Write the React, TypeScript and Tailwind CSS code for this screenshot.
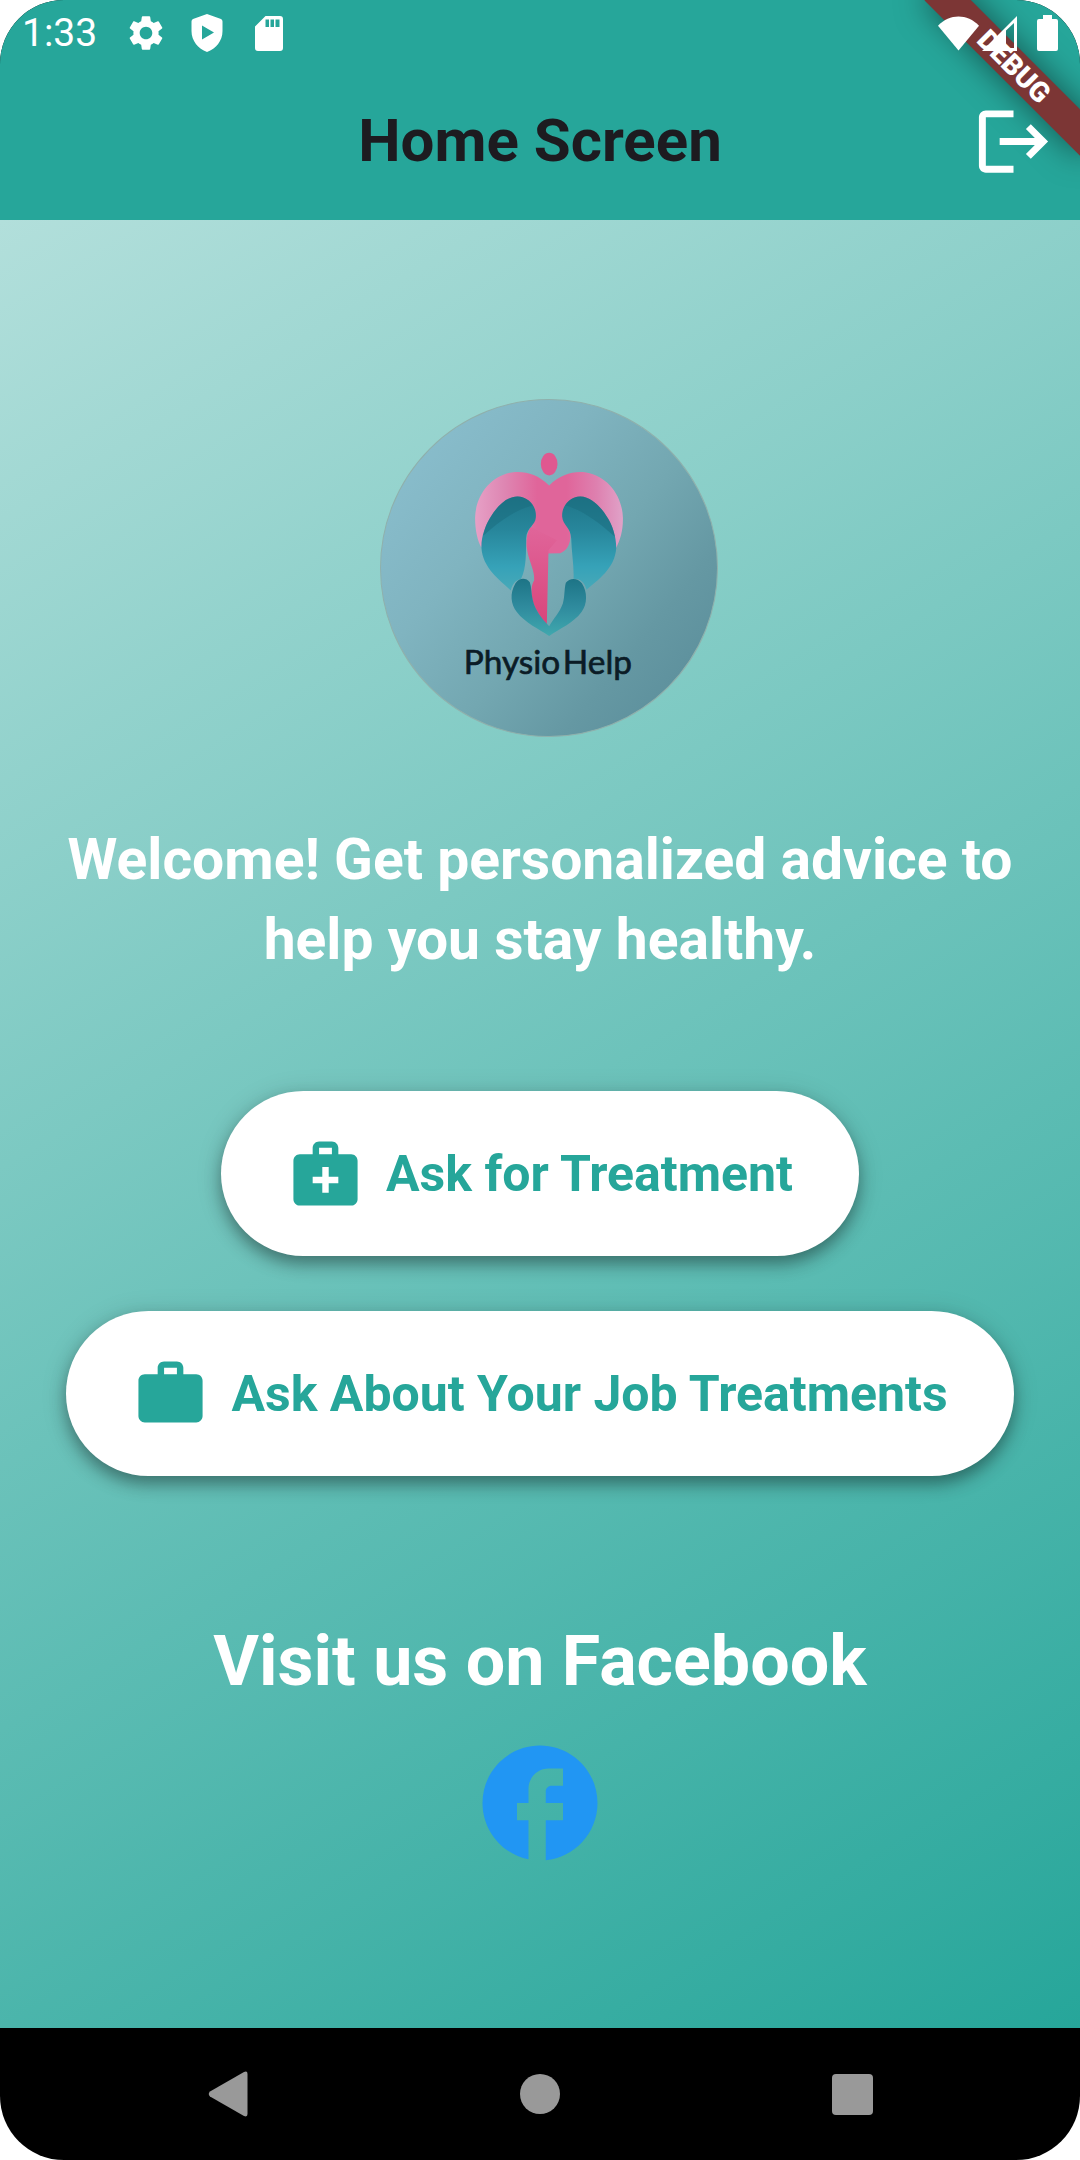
import type { ReactNode } from "react";

function SettingsIcon() {
  return (
    <svg viewBox="0 0 24 24" className="size-[42px]" fill="currentColor" aria-hidden="true">
      <path d="M19.14 12.94c.04-.3.06-.61.06-.94 0-.32-.02-.64-.07-.94l2.03-1.58a.49.49 0 0 0 .12-.61l-1.92-3.32a.488.488 0 0 0-.59-.22l-2.39.96c-.5-.38-1.03-.7-1.62-.94l-.36-2.54a.484.484 0 0 0-.48-.41h-3.84c-.24 0-.43.17-.47.41l-.36 2.54c-.59.24-1.13.57-1.62.94l-2.39-.96c-.22-.08-.47 0-.59.22L2.74 8.87c-.12.21-.08.47.12.61l2.03 1.58c-.05.3-.09.63-.09.94s.02.64.07.94l-2.03 1.58a.49.49 0 0 0-.12.61l1.92 3.32c.12.22.37.29.59.22l2.39-.96c.5.38 1.03.7 1.62.94l.36 2.54c.05.24.24.41.48.41h3.84c.24 0 .44-.17.47-.41l.36-2.54c.59-.24 1.13-.56 1.62-.94l2.39.96c.22.08.47 0 .59-.22l1.92-3.32c.12-.22.07-.47-.12-.61l-2.01-1.58zM12 15.6c-1.98 0-3.6-1.62-3.6-3.6s1.62-3.6 3.6-3.6 3.6 1.62 3.6 3.6-1.62 3.6-3.6 3.6z" />
    </svg>
  );
}

function ShieldIcon() {
  return (
    <svg viewBox="0 0 32 38" className="h-[38px] w-8" fill="currentColor" aria-hidden="true">
      <path
        fillRule="evenodd"
        d="M16 0 30 5Q31.500 5.500 31.500 7.500V17C31.500 27 25 34.500 16 38 7 34.500 .5 27 .5 17V7.500Q.5 5.500 2 5ZM11 11.500V25.500L23 18.500Z"
      />
    </svg>
  );
}

function SdCardIcon() {
  return (
    <svg viewBox="0 0 28 35" className="h-[35px] w-7" fill="currentColor" aria-hidden="true">
      <path
        fillRule="evenodd"
        d="M10.500 0H25Q28 0 28 3V32Q28 35 25 35H3Q0 35 0 32V10.500ZM10.500 3.500V11H14V3.500ZM15.500 3.500V11H19V3.500ZM20.500 3.500V11H24.500V3.500Z"
      />
    </svg>
  );
}

function WifiIcon() {
  return (
    <svg viewBox="0 0 42 35" className="h-[35px] w-[41px]" fill="currentColor" aria-hidden="true">
      <path d="M21 35 0 9.500C12-3 30-3 42 9.500Z" />
    </svg>
  );
}

function SignalIcon() {
  return (
    <svg viewBox="0 0 35 35" className="size-[35px]" fill="currentColor" aria-hidden="true">
      <path fillRule="evenodd" d="M35 0V35H0ZM24 14.500V32H32V7Z" />
    </svg>
  );
}

function BatteryIcon() {
  return (
    <svg viewBox="0 0 21 36" className="h-9 w-[21px]" fill="currentColor" aria-hidden="true">
      <path d="M6 0H15V4H19Q21 4 21 6V34Q21 36 19 36H2Q0 36 0 34V6Q0 4 2 4H6Z" />
    </svg>
  );
}

function PhysioLogo() {
  return (
    <svg viewBox="60 57 1013 1013" className="size-[338px]" role="img" aria-label="Physio Help">
      <defs>
        <linearGradient id="disc" x1="0.12" y1="0.15" x2="0.9" y2="0.8">
          <stop offset="0" stopColor="#88bccb" />
          <stop offset="0.3" stopColor="#80b4c0" />
          <stop offset="0.6" stopColor="#73a7b1" />
          <stop offset="0.85" stopColor="#6598a3" />
          <stop offset="1" stopColor="#5f929e" />
        </linearGradient>
        <linearGradient id="wings" gradientUnits="userSpaceOnUse" x1="345" y1="0" x2="788" y2="0">
          <stop offset="0" stopColor="#e6a0c6" />
          <stop offset="0.2" stopColor="#de86b2" />
          <stop offset="0.42" stopColor="#e0659a" />
          <stop offset="0.62" stopColor="#e0659a" />
          <stop offset="0.82" stopColor="#de80af" />
          <stop offset="1" stopColor="#e0a2c8" />
        </linearGradient>
        <linearGradient id="leg" x1="0" y1="0" x2="0" y2="1">
          <stop offset="0" stopColor="#e0659a" />
          <stop offset="1" stopColor="#d9457b" />
        </linearGradient>
        <linearGradient id="lobe" x1="0" y1="0" x2="0" y2="1">
          <stop offset="0" stopColor="#1f7588" />
          <stop offset="0.35" stopColor="#27869b" />
          <stop offset="0.75" stopColor="#36a2b8" />
          <stop offset="1" stopColor="#48a9b8" />
        </linearGradient>
        <linearGradient id="base" x1="0" y1="0" x2="0" y2="1">
          <stop offset="0" stopColor="#1d7486" />
          <stop offset="0.5" stopColor="#2f8b9e" />
          <stop offset="1" stopColor="#40a8ae" />
        </linearGradient>
      </defs>
      <circle cx="566.500" cy="563.500" r="505" fill="url(#disc)" stroke="#8fb0ac" strokeWidth="3" />
      <ellipse cx="567" cy="252" rx="25" ry="34" fill="#df5890" />
      <path
        fill="url(#wings)"
        d="M567 316C530 280 492 272 455 277C392 287 347 345 345 412C345 450 352 480 364 503L400 420L520 400L515 440L500 470L560 520L600 519C622 512 632 490 631 460L615 420L700 380L768 503C780 480 789 450 788 412C786 345 740 287 678 277C640 272 602 282 567 316Z"
      />
      <path
        fill="url(#leg)"
        d="M512 440C500 455 496 485 501 510C507 545 524 570 522 600C510 620 512 650 524 680C534 702 548 722 560 732L565 510L590 480Z"
      />
      <path
        fill="url(#lobe)"
        d="M364 503C363 470 376 435 392 410C410 380 438 350 472 349C508 350 530 380 527 412C526 436 500 440 498 475C497 515 500 560 483 596C465 600 456 615 452 631C420 600 368 565 364 503Z"
      />
      <path
        fill="#1b6d80"
        opacity="0.55"
        d="M370 466C374 440 384 422 392 410C410 380 438 350 472 349C492 350 508 360 516 376C470 388 420 420 370 466Z"
      />
      <path
        fill="url(#lobe)"
        d="M768 503C768 470 757 435 740 410C722 380 694 350 660 349C625 350 604 380 606 410C608 436 632 442 633 475C634 515 642 560 640 596C664 596 674 610 679 629C712 600 765 565 768 503Z"
      />
      <path
        fill="#1b6d80"
        opacity="0.55"
        d="M764 470C758 442 750 424 740 410C722 380 694 350 660 349C640 350 624 360 616 376C662 388 715 425 764 470Z"
      />
      <path
        fill="url(#base)"
        d="M509 606C498 592 478 592 466 609C448 640 452 672 470 695C495 728 535 745 567 767C598 745 640 728 664 695C682 672 682 635 665 609C652 592 628 592 617 608C612 625 614 650 608 670C598 698 580 715 567 738C545 715 525 690 518 660C513 640 514 620 509 606Z"
      />
      <g fill="#0b1c26" className="font-['Lato']" fontSize="100" stroke="#0b1c26" strokeWidth="2">
        <text x="311" y="880">Physio</text>
        <text x="608" y="880">Help</text>
      </g>
    </svg>
  );
}

function ActionButton({ icon, children }: { icon: ReactNode; children: ReactNode }) {
  return (
    <button
      type="button"
      className="flex min-h-[165px] items-center gap-[22px] rounded-full bg-white px-[66px] text-[50px] leading-[66px] font-bold text-[#26a69a] shadow-[0_8px_16px_rgba(0,0,0,0.34),0_3px_28px_rgba(0,0,0,0.12)]"
    >
      {icon}
      <span className="whitespace-nowrap">{children}</span>
    </button>
  );
}

export default function App() {
  return (
    <div className="min-h-screen bg-white font-['Roboto',sans-serif]">
      <div className="relative flex min-h-screen flex-col overflow-hidden rounded-[64px] bg-black">
        <header className="relative bg-[#26a69a] text-white">
          <div className="absolute top-[50px] -right-11 flex h-[33px] w-[220px] rotate-45 items-center justify-center bg-[#7c3635] text-[28px] leading-none font-black shadow-[0_0_32px_rgba(0,0,0,0.5)]">
            DEBUG
          </div>
          <div className="relative flex h-[66px] items-center justify-between px-[22px]">
            <div className="flex items-center">
              <span className="text-[39px] leading-none">1:33</span>
              <div className="ml-7 flex items-center gap-6">
                <SettingsIcon />
                <ShieldIcon />
                <span className="ml-2"><SdCardIcon /></span>
              </div>
            </div>
            <div className="flex items-center">
              <WifiIcon />
              <span className="ml-[3px]"><SignalIcon /></span>
              <span className="ml-5"><BatteryIcon /></span>
            </div>
          </div>
          <div className="relative flex h-[154px] items-center justify-center pb-1">
            <h1 className="text-[60px] leading-none font-bold text-[#1d1b20]">Home Screen</h1>
            <button type="button" aria-label="Log out" className="absolute right-[25px]">
              <svg viewBox="0 0 24 24" className="size-[83px]" fill="currentColor" aria-hidden="true">
                <path d="M17 7l-1.410 1.410L18.170 11H8v2h10.170l-2.580 2.580L17 17l5-5zM4 5h8V3H4c-1.100 0-2 .9-2 2v14c0 1.100.9 2 2 2h8v-2H4V5z" />
              </svg>
            </button>
          </div>
        </header>

        <main className="flex flex-1 flex-col items-center bg-[linear-gradient(149deg,#b2dfdb,#26a69a)] px-11 pt-[179px] pb-[154px]">
          <div className="ml-[17px]">
            <PhysioLogo />
          </div>
          <p className="mt-[83px] text-center text-[57px] leading-[80px] font-bold text-white">
            Welcome! Get personalized advice to help you stay healthy.
          </p>
          <div className="mt-[111px] flex flex-col items-center gap-[55px]">
            <ActionButton
              icon={
                <svg viewBox="0 0 24 24" className="size-[77px]" fill="currentColor" aria-hidden="true">
                  <path d="M20 6h-4V4c0-1.100-.9-2-2-2h-4c-1.100 0-2 .9-2 2v2H4c-1.100 0-2 .9-2 2v12c0 1.100.9 2 2 2h16c1.100 0 2-.9 2-2V8c0-1.100-.9-2-2-2zM10 4h4v2h-4V4zm6 11h-3v3h-2v-3H8v-2h3v-3h2v3h3v2z" />
                </svg>
              }
            >
              Ask for Treatment
            </ActionButton>
            <ActionButton
              icon={
                <svg viewBox="0 0 24 24" className="size-[77px]" fill="currentColor" aria-hidden="true">
                  <path d="M20 6h-4V4c0-1.110-.89-2-2-2h-4c-1.110 0-2 .89-2 2v2H4c-1.110 0-1.990.89-1.990 2L2 19c0 1.110.89 2 2 2h16c1.110 0 2-.89 2-2V8c0-1.110-.89-2-2-2zm-6 0h-4V4h4v2z" />
                </svg>
              }
            >
              Ask About Your Job Treatments
            </ActionButton>
          </div>
          <h2 className="mt-[145px] text-[70px] leading-[80px] font-bold text-white">Visit us on Facebook</h2>
          <a href="#facebook" aria-label="Facebook" className="mt-[33px] text-[#2196f3]">
            <svg viewBox="0 0 24 24" className="size-[138px]" fill="currentColor" aria-hidden="true">
              <path d="M22 12c0-5.520-4.480-10-10-10S2 6.480 2 12c0 4.840 3.440 8.870 8 9.800V15H8v-3h2V9.500C10 7.570 11.570 6 13.500 6H16v3h-2c-.55 0-1 .45-1 1v2h3v3h-3v6.950c5.050-.5 9-4.760 9-9.950z" />
            </svg>
          </a>
        </main>

        <nav aria-label="System" className="flex h-[132px] items-center justify-center gap-[248px] text-[#999999]">
          <button type="button" aria-label="Back" className="flex w-16 justify-center">
            <svg viewBox="0 0 40 46" className="h-[46px] w-10" fill="currentColor" aria-hidden="true">
              <path d="M36 1Q39.500-.5 39.500 3V43Q39.500 46.500 36 45L2 25.500Q-.5 23 2 20.500Z" />
            </svg>
          </button>
          <button type="button" aria-label="Home" className="flex w-16 justify-center">
            <span className="size-10 rounded-full bg-current" />
          </button>
          <button type="button" aria-label="Recent apps" className="flex w-16 justify-center">
            <span className="size-[41px] rounded bg-current" />
          </button>
        </nav>
      </div>
    </div>
  );
}
